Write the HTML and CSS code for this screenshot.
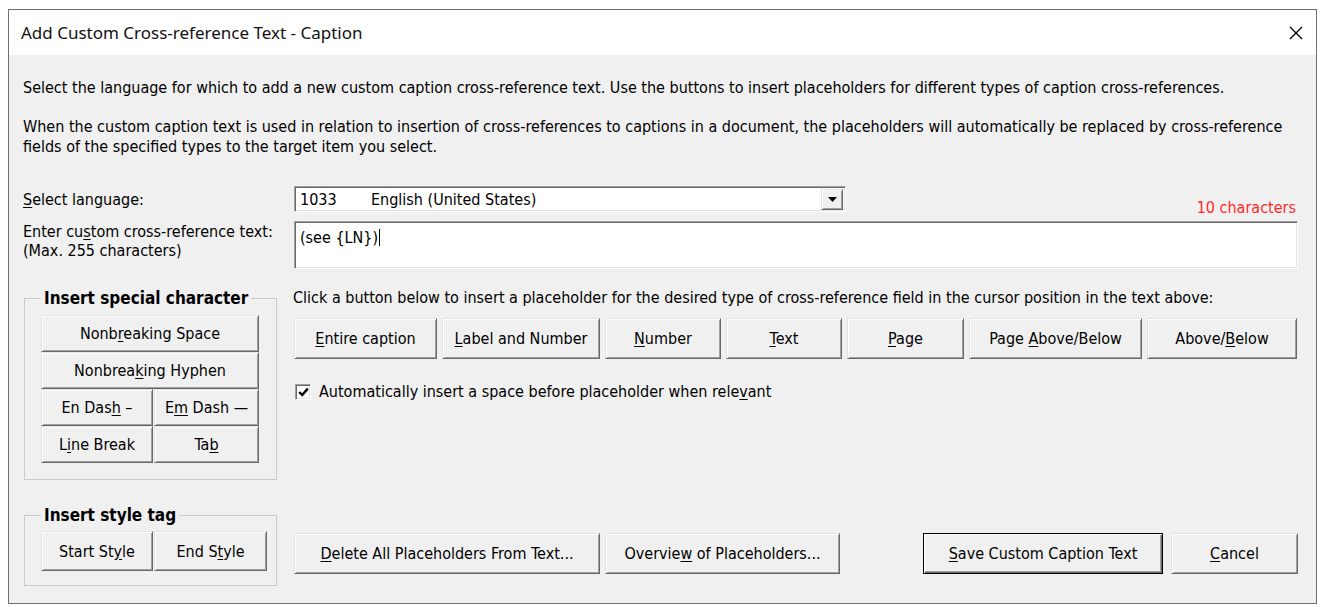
FILE: index.html
```html
<!DOCTYPE html>
<html lang="en">
  <head>
    <meta charset="UTF-8" />
    <meta name="viewport" content="width=device-width, initial-scale=1.0" />
    <title>Add Custom Cross-reference Text - Caption</title>
    <link rel="stylesheet" href="styles.css">
  </head>
  <body>
    <div class="dialog">
      <div class="titlebar">
        <span class="title">Add Custom Cross-reference Text - Caption</span>
        <svg class="close" width="14" height="14" viewBox="0 0 14 14">
          <path d="M1 1L13 13M13 1L1 13" stroke="#000" stroke-width="1.3" fill="none" />
        </svg>
      </div>

      <div class="content">
        <p class="intro">Select the language for which to add a new custom caption cross-reference text. Use the buttons to insert placeholders for different types of caption cross-references.</p>
        <p class="intro second">When the custom caption text is used in relation to insertion of cross-references to captions in a document, the placeholders will automatically be replaced by cross-reference fields of the specified types to the target item you select.</p>

        <div class="row lang-row">
          <label class="cell-label"><u>S</u>elect language:</label>
          <div class="field-line">
            <div class="combo">
              <span class="lang-code">1033</span>
              <span class="lang-name">English (United States)</span>
              <span class="drop">
                <svg width="9" height="5" viewBox="0 0 9 5"><path d="M0 0H9L4.5 5Z" fill="#000" /></svg>
              </span>
            </div>
            <span class="count">10 characters</span>
          </div>
        </div>

        <div class="row text-row">
          <label class="cell-label">Enter cu<u>s</u>tom cross-reference text:<br />(Max. 255 characters)</label>
          <div class="textbox">(see {LN})<span class="caret"></span></div>
        </div>

        <div class="row insert-row">
          <fieldset class="group">
            <legend>Insert special character</legend>
            <div class="char-grid">
              <button class="btn span-2">Nonb<u>r</u>eaking Space</button>
              <button class="btn span-2">Nonbrea<u>k</u>ing Hyphen</button>
              <button class="btn">En Das<u>h</u> &ndash;</button>
              <button class="btn">E<u>m</u> Dash &mdash;</button>
              <button class="btn">L<u>i</u>ne Break</button>
              <button class="btn">Ta<u>b</u></button>
            </div>
          </fieldset>

          <div class="placeholders">
            <p class="hint">Click a button below to insert a placeholder for the desired type of cross-reference field in the cursor position in the text above:</p>
            <div class="ph-buttons">
              <button class="btn tall"><u>E</u>ntire caption</button>
              <button class="btn tall"><u>L</u>abel and Number</button>
              <button class="btn tall"><u>N</u>umber</button>
              <button class="btn tall"><u>T</u>ext</button>
              <button class="btn tall"><u>P</u>age</button>
              <button class="btn tall">Page <u>A</u>bove/Below</button>
              <button class="btn tall">Above/<u>B</u>elow</button>
            </div>
            <label class="check">
              <span class="check-box">
                <svg width="11" height="10" viewBox="0 0 11 10"><path d="M1.2 5L4.2 8L9.8 1.6" stroke="#000" stroke-width="2.4" fill="none" /></svg>
              </span>
              Automatically insert a space before placeholder when rele<u>v</u>ant
            </label>
          </div>
        </div>

        <div class="row bottom-row">
          <fieldset class="group style-group">
            <legend>Insert style tag</legend>
            <div class="style-grid">
              <button class="btn">Start St<u>y</u>le</button>
              <button class="btn">End S<u>t</u>yle</button>
            </div>
          </fieldset>

          <div class="actions">
            <button class="btn tall btn-delete"><u>D</u>elete All Placeholders From Text...</button>
            <button class="btn tall btn-overview">Overvie<u>w</u> of Placeholders...</button>
            <button class="btn tall btn-default btn-save"><u>S</u>ave Custom Caption Text</button>
            <button class="btn tall btn-cancel"><u>C</u>ancel</button>
          </div>
        </div>
      </div>
    </div>
  </body>
</html>
```

FILE: styles.css
```css
body {
  margin: 0;
  background-color: #fff;
  color: #000;
  font-family: "DejaVu Sans Condensed", "DejaVu Sans", sans-serif;
  font-size: 16px;
}

u {
  text-decoration: underline;
  text-underline-offset: 2px;
}

.dialog {
  box-sizing: border-box;
  width: 1309px;
  height: 595px;
  margin: 9px 0 0 8px;
  border: 1px solid #6f6f6f;
  background-color: #f0f0f0;
}

/* title bar */
.titlebar {
  height: 45px;
  display: flex;
  align-items: center;
  justify-content: space-between;
  padding: 0 13px 0 12px;
  background-color: #fff;
}

.title {
  font-family: "Noto Sans", "Open Sans", sans-serif;
  font-size: 17px;
  color: #111;
}

.close {
  display: block;
}

.content {
  padding: 23px 18px 0 14px;
}

.intro {
  margin: 0;
  line-height: 20px;
}

.intro.second {
  margin-top: 19px;
}

.row {
  display: grid;
  grid-template-columns: 271px 1fr;
}

.lang-row {
  margin-top: 29px;
  height: 26px;
}

.cell-label {
  align-self: center;
  line-height: 19px;
}

.field-line {
  display: flex;
  justify-content: space-between;
}

/* sunken controls */
.combo,
.textbox,
.check-box {
  box-sizing: border-box;
  background-color: #fff;
  border: 1px solid;
  border-color: #a0a0a0 #fff #fff #a0a0a0;
  box-shadow: inset 1px 1px #696969, inset -1px -1px #e3e3e3;
}

.combo {
  width: 552px;
  height: 26px;
  display: flex;
  align-items: center;
  padding: 0 2px 0 5px;
}

.lang-code {
  width: 71px;
}

.lang-name {
  flex: 1;
}

.drop {
  box-sizing: border-box;
  width: 22px;
  height: 21px;
  display: flex;
  align-items: center;
  justify-content: center;
  background-color: #f0f0f0;
  border: 1px solid;
  border-color: #e3e3e3 #696969 #696969 #e3e3e3;
  box-shadow: inset 1px 1px #fff, inset -1px -1px #a0a0a0;
}

.count {
  align-self: flex-end;
  margin: 0 2px -4px 0;
  line-height: 16px;
  color: #ff2a2a;
}

.text-row {
  margin-top: 9px;
}

.text-row .cell-label {
  align-self: start;
  padding-top: 1px;
}

.textbox {
  height: 48px;
  padding: 7px 5px;
  line-height: 18px;
}

.caret {
  display: inline-block;
  width: 1px;
  height: 17px;
  margin-left: 1px;
  vertical-align: -3px;
  background-color: #000;
}

/* group boxes */
.group {
  box-sizing: border-box;
  width: 253px;
  min-width: 0;
  margin: 0 0 0 1px;
  padding: 7px 16px 16px;
  border: 1px solid #cacaca;
}

.group legend {
  padding: 0 3px;
  font-weight: bold;
  font-size: 17px;
  line-height: 20px;
}

.insert-row {
  margin-top: 19px;
}

.char-grid {
  display: grid;
  grid-template-columns: 112px 105px;
  grid-auto-rows: 37px;
  column-gap: 1px;
}

.span-2 {
  grid-column: span 2;
}

.style-group {
  padding: 6px 16px 14px;
}

.style-grid {
  display: grid;
  grid-template-columns: 112px 113px;
  grid-auto-rows: 40px;
  column-gap: 1px;
}

/* buttons */
.btn {
  box-sizing: border-box;
  margin: 0;
  padding: 0;
  font: inherit;
  color: #000;
  background-color: #f0f0f0;
  border: 1px solid;
  border-color: #e3e3e3 #696969 #696969 #e3e3e3;
  box-shadow: inset 1px 1px #fff, inset -1px -1px #a0a0a0;
  white-space: nowrap;
}

.btn.tall {
  height: 41px;
}

.btn-default {
  border-color: #000;
  box-shadow: inset 1px 1px #fff, inset -1px -1px #696969, inset -2px -2px #a0a0a0;
}

.hint {
  margin: 0 0 0 -1px;
  line-height: 20px;
}

.ph-buttons {
  display: grid;
  grid-template-columns: 143px 158px 116px 116px 117px 173px 150px;
  column-gap: 5px;
  margin-top: 10px;
}

.check {
  display: flex;
  align-items: center;
  margin-top: 25px;
  line-height: 16px;
}

.check-box {
  width: 16px;
  height: 16px;
  margin: 0 8px 0 1px;
  display: flex;
  align-items: center;
  justify-content: center;
}

.bottom-row {
  margin-top: 25px;
}

.actions {
  align-self: end;
  display: flex;
  margin-bottom: 12px;
}

.btn-delete {
  width: 306px;
}

.btn-overview {
  width: 235px;
  margin-left: 5px;
}

.btn-save {
  width: 240px;
  margin-left: auto;
}

.btn-cancel {
  width: 127px;
  margin-left: 8px;
}
```
